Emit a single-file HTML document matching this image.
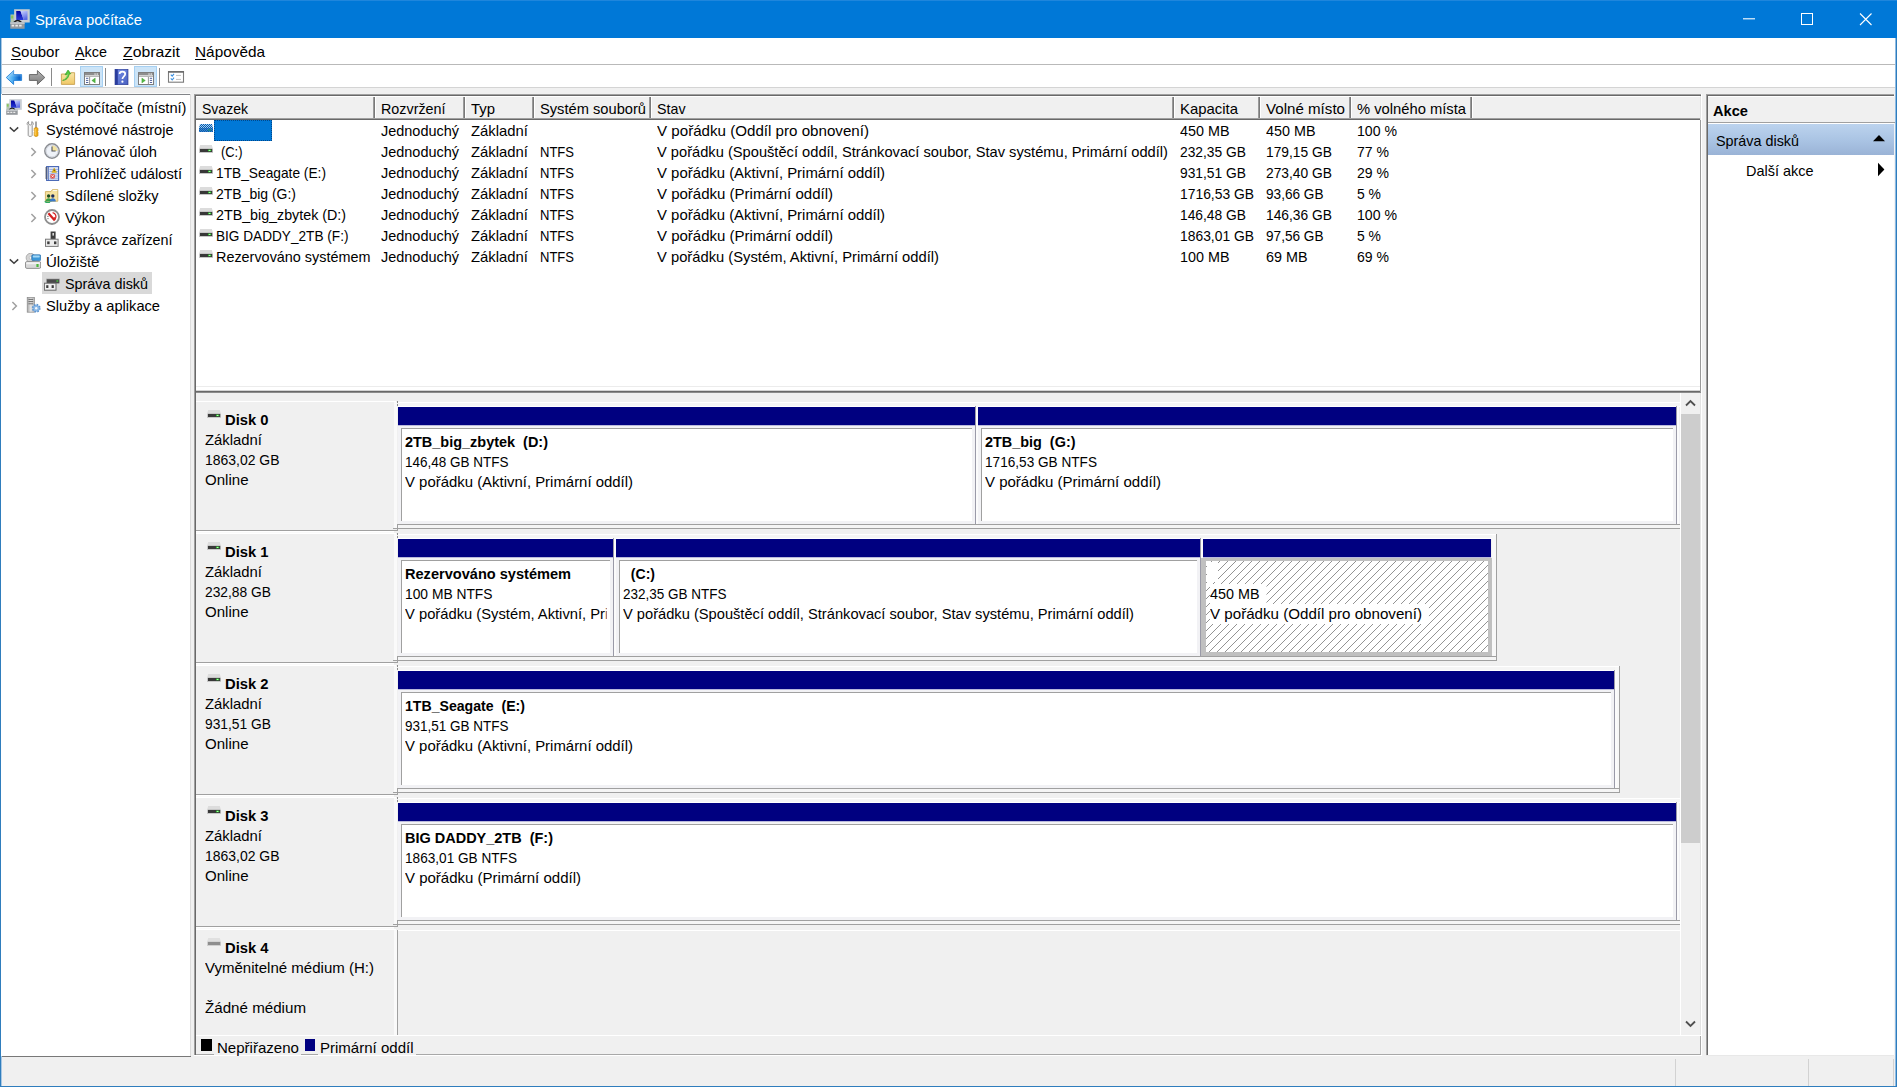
<!DOCTYPE html>
<html lang="cs"><head><meta charset="utf-8"><title>Správa počítače</title>
<style>
html,body{margin:0;padding:0;background:#f0f0f0;}
body{width:1897px;height:1087px;position:relative;overflow:hidden;font-family:"Liberation Sans",sans-serif;font-size:15px;color:#000;}
.r{position:absolute;}
.t{position:absolute;white-space:nowrap;line-height:20px;height:20px;transform-origin:0 0;}
.b{font-weight:bold;}
u{text-decoration:underline;text-underline-offset:2px;text-decoration-thickness:1px;}
</style></head>
<body>
<div class="r" style="left:0px;top:0px;width:1897px;height:1087px;background:#f0f0f0;"></div>
<div class="r" style="left:0px;top:0px;width:1897px;height:38px;background:#0078d7;"></div>
<div class="r" style="left:0px;top:0px;width:1897px;height:1px;background:#1f86dc;"></div>
<div class="r" style="left:1px;top:38px;width:1895px;height:26px;background:#ffffff;"></div>
<div class="r" style="left:1px;top:64px;width:1895px;height:1px;background:#b9b9b9;"></div>
<div class="r" style="left:1px;top:65px;width:1895px;height:22px;background:#ffffff;"></div>
<div class="r" style="left:1px;top:87px;width:1895px;height:1px;background:#d4d4d4;"></div>
<div class="r" style="left:0px;top:38px;width:1px;height:1049px;background:#2f7dbd;"></div>
<div class="r" style="left:1px;top:38px;width:1px;height:1048px;background:#a9c8e4;"></div>
<div class="r" style="left:1896px;top:38px;width:1px;height:1049px;background:#2f7dbd;"></div>
<div class="r" style="left:0px;top:1086px;width:1897px;height:1px;background:#2f7dbd;"></div>
<svg class="r" style="left:1730px;top:0px" width="167" height="38" viewBox="0 0 167 38"><path d="M13 18.8h12" stroke="#fff" stroke-width="1.1" fill="none"/><rect x="71.5" y="13.5" width="11" height="11" stroke="#fff" stroke-width="1" fill="none"/><path d="M130 13.5l11.5 11.5M141.5 13.5l-11.5 11.5" stroke="#fff" stroke-width="1.1" fill="none"/></svg>
<svg class="r" style="left:10px;top:9px" width="20" height="20" viewBox="0 0 16 16"><defs><linearGradient id="sa10" x1="0" y1="0" x2="0" y2="1"><stop offset="0" stop-color="#0000a0"/><stop offset="1" stop-color="#2a3cd8"/></linearGradient><linearGradient id="sb10" x1="0" y1="0" x2="0.4" y2="1"><stop offset="0" stop-color="#ccd4ff"/><stop offset="1" stop-color="#5a6ae6"/></linearGradient></defs><rect x="0.4" y="4.4" width="3.4" height="6.4" fill="#b4c4b0"/><rect x="0.9" y="5.2" width="1.7" height="2.4" fill="#86c85a"/><rect x="3.3" y="0.2" width="12.5" height="10.6" fill="#c8cdd3"/><path d="M5 1.6h3.4l2.6 7.2h-6z" fill="url(#sa10)"/><path d="M8.4 1.6h5.6v7.2h-3z" fill="url(#sb10)"/><path d="M3.2 10.6q2.9-3 5.8 0" stroke="#1a1a1a" stroke-width="1.2" fill="#e8e8e8"/><rect x="0.2" y="10.6" width="11.5" height="5.2" fill="#969a9e"/><rect x="0.2" y="10.6" width="11.5" height="1.3" fill="#c6cace"/><path d="M1.3 13.3h2M4.3 13.3h2M7.3 13.3h2" stroke="#ececec" stroke-width="1.3"/></svg>
<svg class="r" style="left:5px;top:69px" width="18" height="17" viewBox="0 0 18 17"><defs><linearGradient id="ba" x1="0" y1="0" x2="1" y2="0"><stop offset="0" stop-color="#a4e0ff"/><stop offset="0.45" stop-color="#46a8f0"/><stop offset="0.85" stop-color="#0a62c6"/><stop offset="1" stop-color="#2a86e0"/></linearGradient><linearGradient id="bb" x1="0" y1="0" x2="0" y2="1"><stop offset="0" stop-color="#fff" stop-opacity="0.45"/><stop offset="0.5" stop-color="#fff" stop-opacity="0"/></linearGradient></defs><path d="M1.3 8.5L8.6 1.6v4h8v5.8h-8v4z" fill="url(#ba)" stroke="#2a84d8" stroke-width="1" stroke-linejoin="round"/><path d="M1.3 8.5L8.6 1.6v4h8v5.8h-8v4z" fill="url(#bb)"/></svg>
<svg class="r" style="left:28px;top:69px" width="18" height="17" viewBox="0 0 18 17"><defs><linearGradient id="fa" x1="0" y1="0" x2="0" y2="1"><stop offset="0" stop-color="#b8b8b8"/><stop offset="0.5" stop-color="#989898"/><stop offset="1" stop-color="#7e7e7e"/></linearGradient></defs><path d="M16.8 8.5L9.4 1.6v4H1.4v5.8h8v4z" fill="url(#fa)" stroke="#686868" stroke-width="1" stroke-linejoin="round"/></svg>
<div class="r" style="left:51px;top:68px;width:1px;height:18px;background:#8a8a8a;"></div>
<div class="r" style="left:105px;top:68px;width:1px;height:18px;background:#8a8a8a;"></div>
<div class="r" style="left:159px;top:68px;width:1px;height:18px;background:#8a8a8a;"></div>
<svg class="r" style="left:60px;top:69px" width="17" height="17" viewBox="0 0 17 17"><defs><linearGradient id="fo" x1="0" y1="0" x2="0" y2="1"><stop offset="0" stop-color="#f8e6a8"/><stop offset="1" stop-color="#f0c866"/></linearGradient></defs><path d="M1.4 5h8.8l0.9-1.3h3.5v11.7h-13.2z" fill="url(#fo)" stroke="#c8a252" stroke-width="0.9"/><path d="M2.6 11.4c3-1.2 4.6-3.2 5-6.2l-2.6 0.6 3-4.8 2.8 3.6-1.6 0.3c-0.6 4-3 6.4-6.6 6.5z" fill="#52c83e" stroke="#2f9a22" stroke-width="0.6"/><path d="M4.2 10.2c2-1.2 3.4-3 3.8-5.6" stroke="#a8f090" stroke-width="0.7" fill="none"/></svg>
<div class="r" style="left:80px;top:66px;width:23px;height:21px;background:#cce4f7;border:1px solid #a6d0f2;box-sizing:border-box;"></div>
<div class="r" style="left:134px;top:66px;width:23px;height:21px;background:#cce4f7;border:1px solid #a6d0f2;box-sizing:border-box;"></div>
<svg class="r" style="left:84px;top:72px" width="16" height="13" viewBox="0 0 16 13"><rect x="0.5" y="0.5" width="15" height="12" fill="#fff" stroke="#7e7e7e"/><rect x="1" y="1" width="14" height="2.4" fill="#8e8e8e"/><rect x="10.4" y="1.5" width="1.3" height="1.1" fill="#fff"/><rect x="12.6" y="1.5" width="1.3" height="1.1" fill="#fff"/><rect x="1" y="4.1" width="14" height="0.8" fill="#a8a8a8"/><rect x="5.2" y="4.9" width="0.9" height="7.6" fill="#8a8a8a"/><rect x="2" y="5.8" width="2.3" height="1" fill="#52629c"/><rect x="2" y="7.9" width="2.3" height="1" fill="#52629c"/><rect x="2" y="10" width="2.3" height="1" fill="#52629c"/><path d="M11.2 6.1v4.8l-3.4-2.4z" fill="#52b844" stroke="#3a9a2e" stroke-width="0.4"/></svg>
<svg class="r" style="left:138px;top:72px" width="16" height="13" viewBox="0 0 16 13"><rect x="0.5" y="0.5" width="15" height="12" fill="#fff" stroke="#7e7e7e"/><rect x="1" y="1" width="14" height="2.4" fill="#8e8e8e"/><rect x="10.4" y="1.5" width="1.3" height="1.1" fill="#fff"/><rect x="12.6" y="1.5" width="1.3" height="1.1" fill="#fff"/><rect x="1" y="4.1" width="14" height="0.8" fill="#a8a8a8"/><rect x="9.9" y="4.9" width="0.9" height="7.6" fill="#8a8a8a"/><rect x="11.8" y="5.8" width="2.3" height="1" fill="#52629c"/><rect x="11.8" y="7.9" width="2.3" height="1" fill="#52629c"/><rect x="11.8" y="10" width="2.3" height="1" fill="#52629c"/><path d="M3.9 6.1v4.8l3.4-2.4z" fill="#52b844" stroke="#3a9a2e" stroke-width="0.4"/></svg>
<svg class="r" style="left:114px;top:69px" width="15" height="16" viewBox="0 0 15 16"><defs><linearGradient id="hg" x1="0" y1="0" x2="1" y2="1"><stop offset="0" stop-color="#7890ea"/><stop offset="1" stop-color="#4860c0"/></linearGradient></defs><rect x="1" y="0.2" width="13" height="15.6" fill="url(#hg)" stroke="#1e2e86" stroke-width="0.6"/><rect x="1" y="0.2" width="2.8" height="15.6" fill="#2a3c9c"/><path d="M5.6 5c0-3.2 5.6-3.2 5.6 0 0 2.2-2.8 2.4-2.8 5" stroke="#fff" stroke-width="1.7" fill="none"/><circle cx="8.4" cy="12.7" r="1.1" fill="#fff"/></svg>
<svg class="r" style="left:167px;top:70px" width="18" height="14" viewBox="0 0 18 14"><rect x="1.5" y="1.6" width="15" height="10.6" fill="#fff" stroke="#7c7c7c" stroke-width="1.1"/><rect x="1" y="1" width="16" height="1.7" fill="#6c6c6c"/><path d="M3.8 4.6l1.4 1.6 1.8-2.4M3.8 8.4l1.4 1.6 1.8-2.4" stroke="#3c90e0" stroke-width="1.1" fill="none"/><path d="M9 5.4h5M9 9.4h5" stroke="#c0c0c0" stroke-width="1"/></svg>
<div class="r" style="left:1px;top:94px;width:190px;height:962px;background:#ffffff;"></div>
<div class="r" style="left:2px;top:93px;width:189px;height:1px;background:#fafafa;"></div>
<div class="r" style="left:2px;top:94px;width:189px;height:1px;background:#828488;"></div>
<div class="r" style="left:190px;top:94px;width:1px;height:962px;background:#dcdcdc;"></div>
<div class="r" style="left:2px;top:1056px;width:189px;height:1px;background:#787878;"></div>
<div class="r" style="left:42px;top:272px;width:110px;height:22px;background:#d9d9d9;"></div>
<svg class="r" style="left:6px;top:99px" width="16" height="16" viewBox="0 0 16 16"><defs><linearGradient id="sa6" x1="0" y1="0" x2="0" y2="1"><stop offset="0" stop-color="#0000a0"/><stop offset="1" stop-color="#2a3cd8"/></linearGradient><linearGradient id="sb6" x1="0" y1="0" x2="0.4" y2="1"><stop offset="0" stop-color="#ccd4ff"/><stop offset="1" stop-color="#5a6ae6"/></linearGradient></defs><rect x="0.4" y="4.4" width="3.4" height="6.4" fill="#b4c4b0"/><rect x="0.9" y="5.2" width="1.7" height="2.4" fill="#86c85a"/><rect x="3.3" y="0.2" width="12.5" height="10.6" fill="#c8cdd3"/><path d="M5 1.6h3.4l2.6 7.2h-6z" fill="url(#sa6)"/><path d="M8.4 1.6h5.6v7.2h-3z" fill="url(#sb6)"/><path d="M3.2 10.6q2.9-3 5.8 0" stroke="#1a1a1a" stroke-width="1.2" fill="#e8e8e8"/><rect x="0.2" y="10.6" width="11.5" height="5.2" fill="#969a9e"/><rect x="0.2" y="10.6" width="11.5" height="1.3" fill="#c6cace"/><path d="M1.3 13.3h2M4.3 13.3h2M7.3 13.3h2" stroke="#ececec" stroke-width="1.3"/></svg>
<svg class="r" style="left:25px;top:121px" width="16" height="16" viewBox="0 0 16 16"><path d="M3.6 0.6c-1.8 0.7-2 2.9-0.4 4v9.8c0 1.4 4 1.4 4 0v-9.8c1.6-1.1 1.4-3.3-0.4-4v2.6l-1.6 0.9-1.6-0.9z" fill="#f4f4f4" stroke="#8a8a8a" stroke-width="0.9"/><path d="M11 0.4v7" stroke="#5a5a5a" stroke-width="1.1"/><path d="M9.2 7.6c0-1.4 3.8-1.4 3.8 0v2.2c-0.5 0.5-0.5 0.9 0 1.4v3.2c0 1.4-3.8 1.4-3.8 0v-3.2c0.5-0.5 0.5-0.9 0-1.4z" fill="#f2b01e" stroke="#c08208" stroke-width="0.6"/><path d="M10.2 8v6.2" stroke="#ffd978" stroke-width="0.8"/></svg>
<svg class="r" style="left:9px;top:126.4px" width="10" height="8" viewBox="0 0 10 8"><path d="M0.8 1.4l4.2 3.9 4.2-3.9" stroke="#404040" stroke-width="1.5" fill="none"/></svg>
<svg class="r" style="left:44px;top:143px" width="16" height="16" viewBox="0 0 16 16"><circle cx="8" cy="8" r="7.2" fill="#eef2f8" stroke="#8a8d92" stroke-width="1.5"/><path d="M8 8V2.2A5.8 5.8 0 0 1 13.8 8z" fill="#f3e3a0"/><circle cx="8" cy="8" r="5.9" fill="none" stroke="#c8ccd4" stroke-width="0.7"/><path d="M8 3.4v4.6h3.6" stroke="#50545c" stroke-width="1.1" fill="none"/></svg>
<svg class="r" style="left:30px;top:147.4px" width="7" height="10" viewBox="0 0 7 10"><path d="M1.4 0.9l4 4.1-4 4.1" stroke="#a0a0a0" stroke-width="1.5" fill="none"/></svg>
<svg class="r" style="left:44px;top:165px" width="16" height="16" viewBox="0 0 16 16"><rect x="2.6" y="1.6" width="12" height="13.8" fill="#e4eaf8" stroke="#4464b4" stroke-width="1.1"/><path d="M4.4 1.6v13.8" stroke="#4464b4" stroke-width="0.8"/><path d="M1.2 3h2.4M1.2 5h2.4M1.2 7h2.4M1.2 9h2.4M1.2 11h2.4M1.2 13h2.4" stroke="#4a4a4a" stroke-width="0.9"/><path d="M5.4 4.4h8.6M5.4 6.6h8.6M5.4 8.8h8.6M5.4 11h8.6M5.4 13.2h8.6" stroke="#86a0dc" stroke-width="0.8"/><path d="M10.2 3l2.4 4.4h-4.8z" fill="#f2c41c" stroke="#b48a00" stroke-width="0.4"/><path d="M10.2 4.6v1.6" stroke="#3a2a00" stroke-width="0.9"/><rect x="6.4" y="9.2" width="4.4" height="4.2" rx="0.8" fill="#e0463c"/><path d="M7.5 10.2l2.2 2.2M9.7 10.2l-2.2 2.2" stroke="#fff" stroke-width="0.9"/></svg>
<svg class="r" style="left:30px;top:169.4px" width="7" height="10" viewBox="0 0 7 10"><path d="M1.4 0.9l4 4.1-4 4.1" stroke="#a0a0a0" stroke-width="1.5" fill="none"/></svg>
<svg class="r" style="left:44px;top:187px" width="16" height="16" viewBox="0 0 16 16"><path d="M1.4 4.6h5.6l1.4-2h5.4v11.6h-12.4z" fill="#f6e2a0" stroke="#d0b060" stroke-width="0.9"/><path d="M8.8 3.4h4.4" stroke="#fff" stroke-width="0.9"/><circle cx="4.6" cy="9" r="1.7" fill="#1e4e1e"/><path d="M1.6 14.6c0-4.4 6-4.4 6 0z" fill="#3aa048"/><circle cx="8.8" cy="9" r="1.7" fill="#1c2c5c"/><path d="M5.8 14.6c0-4.4 6-4.4 6 0z" fill="#3a78c8"/><path d="M0.8 14.2c1.4 1.6 3.6 1.8 5.2 0.8" stroke="#30a860" stroke-width="1.3" fill="none"/></svg>
<svg class="r" style="left:30px;top:191.4px" width="7" height="10" viewBox="0 0 7 10"><path d="M1.4 0.9l4 4.1-4 4.1" stroke="#a0a0a0" stroke-width="1.5" fill="none"/></svg>
<svg class="r" style="left:44px;top:209px" width="16" height="16" viewBox="0 0 16 16"><circle cx="8" cy="8" r="7" fill="#fff" stroke="#8e8e8e" stroke-width="1.8"/><path d="M4.4 4.2l6.4 7.2" stroke="#d42020" stroke-width="2.2"/><path d="M8.6 3.6c3.2 0.6 4.2 4 2.6 6.4l-1.2-1.6" stroke="#d42020" stroke-width="1.3" fill="none"/><path d="M3.2 7.4h1.4M3.4 9.6h1.2" stroke="#555" stroke-width="0.8"/></svg>
<svg class="r" style="left:30px;top:213.4px" width="7" height="10" viewBox="0 0 7 10"><path d="M1.4 0.9l4 4.1-4 4.1" stroke="#a0a0a0" stroke-width="1.5" fill="none"/></svg>
<svg class="r" style="left:44px;top:231px" width="16" height="16" viewBox="0 0 16 16"><rect x="6.6" y="0.5" width="5" height="7.6" fill="#3e3e3e"/><rect x="8.4" y="2" width="1.6" height="2.6" fill="#d8d8d8"/><rect x="1.5" y="8.2" width="12.6" height="7.2" fill="#ececec" stroke="#7a7a7a" stroke-width="1"/><rect x="3.2" y="10.4" width="2.4" height="2.8" fill="#3e3e3e"/><rect x="10" y="10.4" width="2.4" height="2.8" fill="#3e3e3e"/></svg>
<svg class="r" style="left:25px;top:253px" width="16" height="16" viewBox="0 0 16 16"><circle cx="5.6" cy="4.8" r="4.5" fill="#d4d4d4" stroke="#9a9a9a" stroke-width="0.7"/><circle cx="5.6" cy="4.8" r="1.4" fill="#f6f6f6" stroke="#aaa" stroke-width="0.5"/><rect x="6.8" y="1.8" width="8.9" height="5.8" rx="1" fill="#3c98d8" stroke="#2a6ca8" stroke-width="0.7"/><rect x="7.8" y="2.6" width="6.9" height="1.8" rx="0.6" fill="#a4d8f6"/><rect x="0.5" y="8.6" width="15.2" height="6.8" rx="1.4" fill="#d8d8d8" stroke="#8a8a8a" stroke-width="0.9"/><rect x="1.2" y="9.2" width="13.8" height="2" rx="0.8" fill="#f2f2f2"/><rect x="11.4" y="11" width="2.2" height="3" fill="#4ab83a"/></svg>
<svg class="r" style="left:9px;top:258.4px" width="10" height="8" viewBox="0 0 10 8"><path d="M0.8 1.4l4.2 3.9 4.2-3.9" stroke="#404040" stroke-width="1.5" fill="none"/></svg>
<svg class="r" style="left:44px;top:275px" width="16" height="16" viewBox="0 0 16 16"><rect x="2.6" y="3.8" width="12.8" height="4.6" fill="#4a4a4a"/><rect x="2.6" y="3" width="12.8" height="1.2" fill="#c4c4c4"/><rect x="12.4" y="5.4" width="1.8" height="1.2" fill="#48dc3c"/><rect x="0.4" y="8.2" width="11.6" height="7" fill="#f0f0f0" stroke="#6a6a6a" stroke-width="1"/><rect x="2.2" y="10.2" width="2.2" height="2.8" fill="#3e3e3e"/><rect x="7.6" y="10.2" width="2.2" height="2.8" fill="#3e3e3e"/></svg>
<svg class="r" style="left:25px;top:297px" width="16" height="16" viewBox="0 0 16 16"><defs><linearGradient id="twr" x1="0" y1="0" x2="1" y2="0"><stop offset="0" stop-color="#a8a8a8"/><stop offset="0.5" stop-color="#e6e6e6"/><stop offset="1" stop-color="#b4b4b4"/></linearGradient></defs><rect x="2.2" y="0.4" width="7.2" height="14.8" fill="url(#twr)" stroke="#8a8a8a" stroke-width="0.7"/><path d="M3.4 2.4h4.8M3.4 4.6h4.8M3.4 6.8h4.8" stroke="#6e6e6e" stroke-width="1"/><circle cx="11.2" cy="11.2" r="3.5" fill="#8ab8e6" stroke="#5c94d0" stroke-width="1.8" stroke-dasharray="1.5 1.25"/><circle cx="11.2" cy="11.2" r="2.6" fill="#8ab8e6"/><circle cx="11.2" cy="11.2" r="1.2" fill="#f4f8fc"/></svg>
<svg class="r" style="left:11px;top:301.4px" width="7" height="10" viewBox="0 0 7 10"><path d="M1.4 0.9l4 4.1-4 4.1" stroke="#a0a0a0" stroke-width="1.5" fill="none"/></svg>
<div class="r" style="left:194px;top:94px;width:1508px;height:1px;background:#a0a0a0;"></div>
<div class="r" style="left:195px;top:95px;width:1506px;height:1px;background:#696969;"></div>
<div class="r" style="left:194px;top:94px;width:1px;height:962px;background:#a0a0a0;"></div>
<div class="r" style="left:195px;top:95px;width:1px;height:960px;background:#696969;"></div>
<div class="r" style="left:1701px;top:94px;width:1px;height:962px;background:#ffffff;"></div>
<div class="r" style="left:194px;top:1055px;width:1508px;height:1px;background:#ffffff;"></div>
<div class="r" style="left:1700px;top:96px;width:1px;height:959px;background:#e3e3e3;"></div>
<div class="r" style="left:196px;top:1054px;width:1505px;height:1px;background:#e3e3e3;"></div>
<div class="r" style="left:196px;top:120px;width:1504px;height:267px;background:#ffffff;"></div>
<div class="r" style="left:196px;top:96px;width:1504px;height:1px;background:#ffffff;"></div>
<div class="r" style="left:196px;top:97px;width:1504px;height:21px;background:#f0f0f0;"></div>
<div class="r" style="left:196px;top:118px;width:1504px;height:1px;background:#a0a0a0;"></div>
<div class="r" style="left:196px;top:119px;width:1504px;height:1px;background:#696969;"></div>
<div class="r" style="left:373px;top:97px;width:1px;height:21px;background:#9a9a9a;"></div>
<div class="r" style="left:374px;top:97px;width:1px;height:21px;background:#7a7a7a;"></div>
<div class="r" style="left:375px;top:97px;width:1px;height:21px;background:#ffffff;"></div>
<div class="r" style="left:463px;top:97px;width:1px;height:21px;background:#9a9a9a;"></div>
<div class="r" style="left:464px;top:97px;width:1px;height:21px;background:#7a7a7a;"></div>
<div class="r" style="left:465px;top:97px;width:1px;height:21px;background:#ffffff;"></div>
<div class="r" style="left:532px;top:97px;width:1px;height:21px;background:#9a9a9a;"></div>
<div class="r" style="left:533px;top:97px;width:1px;height:21px;background:#7a7a7a;"></div>
<div class="r" style="left:534px;top:97px;width:1px;height:21px;background:#ffffff;"></div>
<div class="r" style="left:649px;top:97px;width:1px;height:21px;background:#9a9a9a;"></div>
<div class="r" style="left:650px;top:97px;width:1px;height:21px;background:#7a7a7a;"></div>
<div class="r" style="left:651px;top:97px;width:1px;height:21px;background:#ffffff;"></div>
<div class="r" style="left:1172px;top:97px;width:1px;height:21px;background:#9a9a9a;"></div>
<div class="r" style="left:1173px;top:97px;width:1px;height:21px;background:#7a7a7a;"></div>
<div class="r" style="left:1174px;top:97px;width:1px;height:21px;background:#ffffff;"></div>
<div class="r" style="left:1258px;top:97px;width:1px;height:21px;background:#9a9a9a;"></div>
<div class="r" style="left:1259px;top:97px;width:1px;height:21px;background:#7a7a7a;"></div>
<div class="r" style="left:1260px;top:97px;width:1px;height:21px;background:#ffffff;"></div>
<div class="r" style="left:1349px;top:97px;width:1px;height:21px;background:#9a9a9a;"></div>
<div class="r" style="left:1350px;top:97px;width:1px;height:21px;background:#7a7a7a;"></div>
<div class="r" style="left:1351px;top:97px;width:1px;height:21px;background:#ffffff;"></div>
<div class="r" style="left:1470px;top:97px;width:1px;height:21px;background:#9a9a9a;"></div>
<div class="r" style="left:1471px;top:97px;width:1px;height:21px;background:#7a7a7a;"></div>
<div class="r" style="left:1472px;top:97px;width:1px;height:21px;background:#ffffff;"></div>
<svg class="r" style="left:199px;top:124px" width="14" height="9" viewBox="0 0 14 9"><defs><pattern id="dth" width="2" height="2" patternUnits="userSpaceOnUse"><rect width="1" height="1" fill="#0a58a8"/><rect x="1" y="1" width="1" height="1" fill="#0a58a8"/><rect x="1" width="1" height="1" fill="#9cd0f8"/><rect y="1" width="1" height="1" fill="#9cd0f8"/></pattern><pattern id="dtk" width="2" height="2" patternUnits="userSpaceOnUse"><rect width="2" height="2" fill="#0c5cae"/><rect x="1" width="1" height="1" fill="#3c84cc"/><rect y="1" width="1" height="1" fill="#3c84cc"/></pattern></defs><path d="M1 0h12l1 4h-14z" fill="url(#dth)"/><rect x="0" y="4" width="14" height="4" fill="url(#dtk)"/><rect x="9" y="5" width="3" height="2" fill="#1a8a8a"/></svg>
<svg class="r" style="left:199px;top:145px" width="14" height="9" viewBox="0 0 14 9"><path d="M1.2 0h11.6l1.2 3.9h-14z" fill="#dcdcdc"/><rect x="0" y="3.8" width="14" height="4.2" fill="#c8c8c8"/><rect x="1" y="3.9" width="12.2" height="3.1" fill="#383838"/><rect x="9" y="4.7" width="3.2" height="1.5" fill="#38d838"/><rect x="10" y="4.9" width="1.2" height="1" fill="#b8ffb8"/></svg>
<svg class="r" style="left:199px;top:166px" width="14" height="9" viewBox="0 0 14 9"><path d="M1.2 0h11.6l1.2 3.9h-14z" fill="#dcdcdc"/><rect x="0" y="3.8" width="14" height="4.2" fill="#c8c8c8"/><rect x="1" y="3.9" width="12.2" height="3.1" fill="#383838"/><rect x="9" y="4.7" width="3.2" height="1.5" fill="#38d838"/><rect x="10" y="4.9" width="1.2" height="1" fill="#b8ffb8"/></svg>
<svg class="r" style="left:199px;top:187px" width="14" height="9" viewBox="0 0 14 9"><path d="M1.2 0h11.6l1.2 3.9h-14z" fill="#dcdcdc"/><rect x="0" y="3.8" width="14" height="4.2" fill="#c8c8c8"/><rect x="1" y="3.9" width="12.2" height="3.1" fill="#383838"/><rect x="9" y="4.7" width="3.2" height="1.5" fill="#38d838"/><rect x="10" y="4.9" width="1.2" height="1" fill="#b8ffb8"/></svg>
<svg class="r" style="left:199px;top:208px" width="14" height="9" viewBox="0 0 14 9"><path d="M1.2 0h11.6l1.2 3.9h-14z" fill="#dcdcdc"/><rect x="0" y="3.8" width="14" height="4.2" fill="#c8c8c8"/><rect x="1" y="3.9" width="12.2" height="3.1" fill="#383838"/><rect x="9" y="4.7" width="3.2" height="1.5" fill="#38d838"/><rect x="10" y="4.9" width="1.2" height="1" fill="#b8ffb8"/></svg>
<svg class="r" style="left:199px;top:229px" width="14" height="9" viewBox="0 0 14 9"><path d="M1.2 0h11.6l1.2 3.9h-14z" fill="#dcdcdc"/><rect x="0" y="3.8" width="14" height="4.2" fill="#c8c8c8"/><rect x="1" y="3.9" width="12.2" height="3.1" fill="#383838"/><rect x="9" y="4.7" width="3.2" height="1.5" fill="#38d838"/><rect x="10" y="4.9" width="1.2" height="1" fill="#b8ffb8"/></svg>
<svg class="r" style="left:199px;top:250px" width="14" height="9" viewBox="0 0 14 9"><path d="M1.2 0h11.6l1.2 3.9h-14z" fill="#dcdcdc"/><rect x="0" y="3.8" width="14" height="4.2" fill="#c8c8c8"/><rect x="1" y="3.9" width="12.2" height="3.1" fill="#383838"/><rect x="9" y="4.7" width="3.2" height="1.5" fill="#38d838"/><rect x="10" y="4.9" width="1.2" height="1" fill="#b8ffb8"/></svg>
<div class="r" style="left:214px;top:120px;width:58px;height:21px;background:#0078d7;outline:1px dotted rgba(0,40,90,0.6);outline-offset:-1px;"></div>
<div class="r" style="left:196px;top:387px;width:1504px;height:1px;background:#ffffff;"></div>
<div class="r" style="left:196px;top:388px;width:1504px;height:2px;background:#ffffff;"></div>
<div class="r" style="left:196px;top:386px;width:1504px;height:1px;background:#ececec;"></div>
<div class="r" style="left:196px;top:390px;width:1505px;height:1px;background:#d4d4d4;"></div>
<div class="r" style="left:196px;top:391px;width:1505px;height:1px;background:#696969;"></div>
<div class="r" style="left:196px;top:392px;width:1505px;height:1px;background:#8c8c8c;"></div>
<div class="r" style="left:1700px;top:120px;width:1px;height:272px;background:#9a9a9a;"></div>
<div class="r" style="left:196px;top:401px;width:200px;height:1px;background:#ffffff;"></div>
<div class="r" style="left:196px;top:530px;width:202px;height:1px;background:#a0a0a0;"></div>
<div class="r" style="left:196px;top:531px;width:198px;height:1px;background:#ffffff;"></div>
<div class="r" style="left:196px;top:532px;width:198px;height:1px;background:#fafafa;"></div>
<div class="r" style="left:394px;top:402px;width:3px;height:127px;background:#fafafa;"></div>
<svg class="r" style="left:207px;top:410px" width="14" height="9" viewBox="0 0 14 9"><path d="M1.2 0h11.6l1.2 3.9h-14z" fill="#dcdcdc"/><rect x="0" y="3.8" width="14" height="4.2" fill="#c8c8c8"/><rect x="1" y="3.9" width="12.2" height="3.1" fill="#383838"/><rect x="9" y="4.7" width="3.2" height="1.5" fill="#38d838"/><rect x="10" y="4.9" width="1.2" height="1" fill="#b8ffb8"/></svg>
<div class="r" style="left:397px;top:401px;width:1px;height:6px;background:repeating-linear-gradient(#8c8c8c 0,#8c8c8c 2px,transparent 2px,transparent 3px)"></div>
<div class="r" style="left:398px;top:402px;width:1282px;height:1px;background:#ffffff;"></div>
<div class="r" style="left:398px;top:403px;width:1282px;height:3px;background:#f5f5f5;"></div>
<div class="r" style="left:398px;top:406px;width:1282px;height:1px;background:#ffffff;"></div>
<div class="r" style="left:398px;top:425px;width:1282px;height:99px;background:#f2f2f5;"></div>
<div class="r" style="left:397px;top:524px;width:1284px;height:1px;background:#a0a0a0;"></div>
<div class="r" style="left:398px;top:525px;width:1282px;height:3px;background:#f5f5f5;"></div>
<div class="r" style="left:393px;top:528px;width:1288px;height:1px;background:#a0a0a0;"></div>
<div class="r" style="left:397px;top:524px;width:1px;height:7px;background:#a0a0a0;"></div>
<div class="r" style="left:398px;top:407px;width:577px;height:18px;background:#000080;"></div>
<div class="r" style="left:398px;top:425px;width:577px;height:1px;background:#b9b9dc;"></div>
<div class="r" style="left:975px;top:406px;width:1px;height:118px;background:#9a9aa8;"></div>
<div class="r" style="left:976px;top:406px;width:2px;height:118px;background:#fbfbfb;"></div>
<div class="r" style="left:401px;top:428px;width:571px;height:93px;background:#ffffff;border-top:1px solid #a0a0a0;border-left:1px solid #a0a0a0;box-sizing:border-box;"></div>
<div class="r" style="left:978px;top:407px;width:698px;height:18px;background:#000080;"></div>
<div class="r" style="left:978px;top:425px;width:698px;height:1px;background:#b9b9dc;"></div>
<div class="r" style="left:1676px;top:406px;width:1px;height:118px;background:#9a9aa8;"></div>
<div class="r" style="left:1677px;top:406px;width:2px;height:118px;background:#fbfbfb;"></div>
<div class="r" style="left:981px;top:428px;width:692px;height:93px;background:#ffffff;border-top:1px solid #a0a0a0;border-left:1px solid #a0a0a0;box-sizing:border-box;"></div>
<div class="r" style="left:196px;top:533px;width:200px;height:1px;background:#ffffff;"></div>
<div class="r" style="left:196px;top:662px;width:202px;height:1px;background:#a0a0a0;"></div>
<div class="r" style="left:196px;top:663px;width:198px;height:1px;background:#ffffff;"></div>
<div class="r" style="left:196px;top:664px;width:198px;height:1px;background:#fafafa;"></div>
<div class="r" style="left:394px;top:534px;width:3px;height:127px;background:#fafafa;"></div>
<svg class="r" style="left:207px;top:542px" width="14" height="9" viewBox="0 0 14 9"><path d="M1.2 0h11.6l1.2 3.9h-14z" fill="#dcdcdc"/><rect x="0" y="3.8" width="14" height="4.2" fill="#c8c8c8"/><rect x="1" y="3.9" width="12.2" height="3.1" fill="#383838"/><rect x="9" y="4.7" width="3.2" height="1.5" fill="#38d838"/><rect x="10" y="4.9" width="1.2" height="1" fill="#b8ffb8"/></svg>
<div class="r" style="left:397px;top:533px;width:1px;height:6px;background:repeating-linear-gradient(#8c8c8c 0,#8c8c8c 2px,transparent 2px,transparent 3px)"></div>
<div class="r" style="left:398px;top:534px;width:1098px;height:1px;background:#ffffff;"></div>
<div class="r" style="left:398px;top:535px;width:1098px;height:3px;background:#f5f5f5;"></div>
<div class="r" style="left:398px;top:538px;width:1098px;height:1px;background:#ffffff;"></div>
<div class="r" style="left:398px;top:557px;width:1098px;height:99px;background:#f2f2f5;"></div>
<div class="r" style="left:397px;top:656px;width:1100px;height:1px;background:#a0a0a0;"></div>
<div class="r" style="left:398px;top:657px;width:1098px;height:3px;background:#f5f5f5;"></div>
<div class="r" style="left:393px;top:660px;width:1104px;height:1px;background:#a0a0a0;"></div>
<div class="r" style="left:397px;top:656px;width:1px;height:7px;background:#a0a0a0;"></div>
<div class="r" style="left:1496px;top:534px;width:1px;height:127px;background:#a0a0a0;"></div>
<div class="r" style="left:1492px;top:535px;width:4px;height:121px;background:#f8f8f8;"></div>
<div class="r" style="left:398px;top:539px;width:215px;height:18px;background:#000080;"></div>
<div class="r" style="left:398px;top:557px;width:215px;height:1px;background:#b9b9dc;"></div>
<div class="r" style="left:613px;top:538px;width:1px;height:118px;background:#9a9aa8;"></div>
<div class="r" style="left:614px;top:538px;width:2px;height:118px;background:#fbfbfb;"></div>
<div class="r" style="left:401px;top:560px;width:209px;height:93px;background:#ffffff;border-top:1px solid #a0a0a0;border-left:1px solid #a0a0a0;box-sizing:border-box;"></div>
<div class="r" style="left:616px;top:539px;width:584px;height:18px;background:#000080;"></div>
<div class="r" style="left:616px;top:557px;width:584px;height:1px;background:#b9b9dc;"></div>
<div class="r" style="left:1200px;top:538px;width:1px;height:118px;background:#9a9aa8;"></div>
<div class="r" style="left:1201px;top:538px;width:2px;height:118px;background:#fbfbfb;"></div>
<div class="r" style="left:619px;top:560px;width:578px;height:93px;background:#ffffff;border-top:1px solid #a0a0a0;border-left:1px solid #a0a0a0;box-sizing:border-box;"></div>
<div class="r" style="left:1203px;top:539px;width:288px;height:18px;background:#000080;"></div>
<div class="r" style="left:1203px;top:557px;width:288px;height:1px;background:#b9b9dc;"></div>
<div class="r" style="left:1201px;top:558px;width:291px;height:98px;background:#c0c0c0;"></div>
<svg class="r" style="left:1206px;top:561px" width="282" height="91" viewBox="0 0 282 91"><defs><pattern id="hatch" x="6" y="0" width="8" height="8" patternUnits="userSpaceOnUse"><rect width="8" height="8" fill="#fff"/><path d="M-1 9L9 -1M-1 1L1 -1M7 9L9 7" stroke="#808080" stroke-width="0.85"/></pattern></defs><rect width="282" height="91" fill="url(#hatch)"/></svg>
<div class="r" style="left:1207px;top:562px;width:11px;height:20px;background:#ffffff;"></div>
<div class="r" style="left:196px;top:665px;width:200px;height:1px;background:#ffffff;"></div>
<div class="r" style="left:196px;top:794px;width:202px;height:1px;background:#a0a0a0;"></div>
<div class="r" style="left:196px;top:795px;width:198px;height:1px;background:#ffffff;"></div>
<div class="r" style="left:196px;top:796px;width:198px;height:1px;background:#fafafa;"></div>
<div class="r" style="left:394px;top:666px;width:3px;height:127px;background:#fafafa;"></div>
<svg class="r" style="left:207px;top:674px" width="14" height="9" viewBox="0 0 14 9"><path d="M1.2 0h11.6l1.2 3.9h-14z" fill="#dcdcdc"/><rect x="0" y="3.8" width="14" height="4.2" fill="#c8c8c8"/><rect x="1" y="3.9" width="12.2" height="3.1" fill="#383838"/><rect x="9" y="4.7" width="3.2" height="1.5" fill="#38d838"/><rect x="10" y="4.9" width="1.2" height="1" fill="#b8ffb8"/></svg>
<div class="r" style="left:397px;top:665px;width:1px;height:6px;background:repeating-linear-gradient(#8c8c8c 0,#8c8c8c 2px,transparent 2px,transparent 3px)"></div>
<div class="r" style="left:398px;top:666px;width:1221px;height:1px;background:#ffffff;"></div>
<div class="r" style="left:398px;top:667px;width:1221px;height:3px;background:#f5f5f5;"></div>
<div class="r" style="left:398px;top:670px;width:1221px;height:1px;background:#ffffff;"></div>
<div class="r" style="left:398px;top:689px;width:1221px;height:99px;background:#f2f2f5;"></div>
<div class="r" style="left:397px;top:788px;width:1223px;height:1px;background:#a0a0a0;"></div>
<div class="r" style="left:398px;top:789px;width:1221px;height:3px;background:#f5f5f5;"></div>
<div class="r" style="left:393px;top:792px;width:1227px;height:1px;background:#a0a0a0;"></div>
<div class="r" style="left:397px;top:788px;width:1px;height:7px;background:#a0a0a0;"></div>
<div class="r" style="left:1619px;top:666px;width:1px;height:127px;background:#a0a0a0;"></div>
<div class="r" style="left:1615px;top:667px;width:4px;height:121px;background:#f8f8f8;"></div>
<div class="r" style="left:398px;top:671px;width:1216px;height:18px;background:#000080;"></div>
<div class="r" style="left:398px;top:689px;width:1216px;height:1px;background:#b9b9dc;"></div>
<div class="r" style="left:1614px;top:670px;width:1px;height:118px;background:#9a9aa8;"></div>
<div class="r" style="left:1615px;top:670px;width:2px;height:118px;background:#fbfbfb;"></div>
<div class="r" style="left:401px;top:692px;width:1210px;height:93px;background:#ffffff;border-top:1px solid #a0a0a0;border-left:1px solid #a0a0a0;box-sizing:border-box;"></div>
<div class="r" style="left:196px;top:797px;width:200px;height:1px;background:#ffffff;"></div>
<div class="r" style="left:196px;top:926px;width:202px;height:1px;background:#a0a0a0;"></div>
<div class="r" style="left:196px;top:927px;width:198px;height:1px;background:#ffffff;"></div>
<div class="r" style="left:196px;top:928px;width:198px;height:1px;background:#fafafa;"></div>
<div class="r" style="left:394px;top:798px;width:3px;height:127px;background:#fafafa;"></div>
<svg class="r" style="left:207px;top:806px" width="14" height="9" viewBox="0 0 14 9"><path d="M1.2 0h11.6l1.2 3.9h-14z" fill="#dcdcdc"/><rect x="0" y="3.8" width="14" height="4.2" fill="#c8c8c8"/><rect x="1" y="3.9" width="12.2" height="3.1" fill="#383838"/><rect x="9" y="4.7" width="3.2" height="1.5" fill="#38d838"/><rect x="10" y="4.9" width="1.2" height="1" fill="#b8ffb8"/></svg>
<div class="r" style="left:397px;top:797px;width:1px;height:6px;background:repeating-linear-gradient(#8c8c8c 0,#8c8c8c 2px,transparent 2px,transparent 3px)"></div>
<div class="r" style="left:398px;top:798px;width:1282px;height:1px;background:#ffffff;"></div>
<div class="r" style="left:398px;top:799px;width:1282px;height:3px;background:#f5f5f5;"></div>
<div class="r" style="left:398px;top:802px;width:1282px;height:1px;background:#ffffff;"></div>
<div class="r" style="left:398px;top:821px;width:1282px;height:99px;background:#f2f2f5;"></div>
<div class="r" style="left:397px;top:920px;width:1284px;height:1px;background:#a0a0a0;"></div>
<div class="r" style="left:398px;top:921px;width:1282px;height:3px;background:#f5f5f5;"></div>
<div class="r" style="left:393px;top:924px;width:1288px;height:1px;background:#a0a0a0;"></div>
<div class="r" style="left:397px;top:920px;width:1px;height:7px;background:#a0a0a0;"></div>
<div class="r" style="left:398px;top:803px;width:1278px;height:18px;background:#000080;"></div>
<div class="r" style="left:398px;top:821px;width:1278px;height:1px;background:#b9b9dc;"></div>
<div class="r" style="left:1676px;top:802px;width:1px;height:118px;background:#9a9aa8;"></div>
<div class="r" style="left:1677px;top:802px;width:2px;height:118px;background:#fbfbfb;"></div>
<div class="r" style="left:401px;top:824px;width:1272px;height:93px;background:#ffffff;border-top:1px solid #a0a0a0;border-left:1px solid #a0a0a0;box-sizing:border-box;"></div>
<div class="r" style="left:196px;top:929px;width:200px;height:1px;background:#ffffff;"></div>
<div class="r" style="left:394px;top:930px;width:3px;height:105px;background:#fafafa;"></div>
<svg class="r" style="left:207px;top:938px" width="14" height="9" viewBox="0 0 14 9"><path d="M1.2 0h11.6l1.2 3.9h-14z" fill="#e0e0e0"/><rect x="0" y="3.8" width="14" height="4.2" fill="#d0d0d0"/><rect x="1" y="3.9" width="12.2" height="3.1" fill="#8e8e8e"/></svg>
<div class="r" style="left:397px;top:930px;width:1px;height:105px;background:#a0a0a0;"></div>
<div class="r" style="left:398px;top:930px;width:1282px;height:1px;background:#ffffff;"></div>
<div class="r" style="left:196px;top:1035px;width:1505px;height:19px;background:#f0f0f0;"></div>
<div class="r" style="left:196px;top:1035px;width:1505px;height:1px;background:#ffffff;"></div>
<div class="r" style="left:1680px;top:393px;width:1px;height:642px;background:#ffffff;"></div>
<div class="r" style="left:1681px;top:393px;width:19px;height:642px;background:#f0f0f0;"></div>
<div class="r" style="left:1681px;top:414px;width:19px;height:429px;background:#cdcdcd;"></div>
<svg class="r" style="left:1685px;top:399px" width="11" height="8" viewBox="0 0 11 8"><path d="M1 6.5l4.5-4.5 4.5 4.5" stroke="#505050" stroke-width="1.8" fill="none"/></svg>
<svg class="r" style="left:1685px;top:1020px" width="11" height="8" viewBox="0 0 11 8"><path d="M1 1.5l4.5 4.5 4.5-4.5" stroke="#505050" stroke-width="1.8" fill="none"/></svg>
<div class="r" style="left:201px;top:1039px;width:11px;height:12px;background:#000;"></div>
<div class="r" style="left:305px;top:1039px;width:10px;height:12px;background:#000080;"></div>
<div class="r" style="left:196px;top:1054px;width:1505px;height:1px;background:#a8a8a8;"></div>
<div class="r" style="left:214px;top:1054px;width:87px;height:1px;background:#f0f0f0;"></div>
<div class="r" style="left:318px;top:1054px;width:98px;height:1px;background:#f0f0f0;"></div>
<div class="r" style="left:1700px;top:1036px;width:1px;height:19px;background:#a8a8a8;"></div>
<div class="r" style="left:1706px;top:94px;width:190px;height:1px;background:#a0a0a0;"></div>
<div class="r" style="left:1707px;top:95px;width:188px;height:1px;background:#696969;"></div>
<div class="r" style="left:1706px;top:94px;width:1px;height:962px;background:#a0a0a0;"></div>
<div class="r" style="left:1707px;top:95px;width:1px;height:960px;background:#696969;"></div>
<div class="r" style="left:1708px;top:96px;width:187px;height:959px;background:#ffffff;"></div>
<div class="r" style="left:1706px;top:1055px;width:190px;height:1px;background:#e8e8e8;"></div>
<div class="r" style="left:1894px;top:94px;width:1px;height:962px;background:#f4f4f4;"></div>
<div class="r" style="left:1895px;top:38px;width:1px;height:1048px;background:#8fbbe2;"></div>
<div class="r" style="left:1708px;top:97px;width:187px;height:25px;background:#f0f0f0;"></div>
<div class="r" style="left:1708px;top:122px;width:187px;height:1px;background:#a0a0a0;"></div>
<div class="r" style="left:1708px;top:124px;width:186px;height:31px;background:linear-gradient(#bcd3ee,#a9c3e3 55%,#9ab3d6);"></div>
<svg class="r" style="left:1872px;top:134px" width="14" height="8" viewBox="0 0 14 8"><path d="M1 7.2h12L7 1z" fill="#000"/></svg>
<svg class="r" style="left:1877px;top:162px" width="8" height="15" viewBox="0 0 8 15"><path d="M1 0.8v13.4l6.4-6.7z" fill="#000"/></svg>
<div class="r" style="left:1675px;top:1059px;width:1px;height:27px;background:#d2d2d2;"></div>
<div class="r" style="left:1808px;top:1059px;width:1px;height:27px;background:#d2d2d2;"></div>
<div class="r" style="left:1893px;top:1059px;width:1px;height:27px;background:#d2d2d2;"></div>
<span class="t" style="left:35px;top:10px;color:#fff;transform:scaleX(0.9870);">Správa počítače</span>
<span class="t" style="left:11px;top:42px;transform:scaleX(1.0023);"><u>S</u>oubor</span>
<span class="t" style="left:75px;top:42px;transform:scaleX(0.9593);"><u>A</u>kce</span>
<span class="t" style="left:123px;top:42px;transform:scaleX(1.0516);"><u>Z</u>obrazit</span>
<span class="t" style="left:195px;top:42px;transform:scaleX(1.0233);"><u>N</u>ápověda</span>
<span class="t" style="left:27px;top:98px;transform:scaleX(0.9761);">Správa počítače (místní)</span>
<span class="t" style="left:46px;top:120px;transform:scaleX(0.9679);">Systémové nástroje</span>
<span class="t" style="left:65px;top:142px;transform:scaleX(0.9763);">Plánovač úloh</span>
<span class="t" style="left:65px;top:164px;transform:scaleX(0.9813);">Prohlížeč událostí</span>
<span class="t" style="left:65px;top:186px;transform:scaleX(0.9667);">Sdílené složky</span>
<span class="t" style="left:65px;top:208px;transform:scaleX(0.9592);">Výkon</span>
<span class="t" style="left:65px;top:230px;transform:scaleX(0.9550);">Správce zařízení</span>
<span class="t" style="left:46px;top:252px;transform:scaleX(1.0026);">Úložiště</span>
<span class="t" style="left:65px;top:274px;transform:scaleX(0.9571);">Správa disků</span>
<span class="t" style="left:46px;top:296px;transform:scaleX(0.9766);">Služby a aplikace</span>
<span class="t" style="left:202px;top:99px;transform:scaleX(0.9349);">Svazek</span>
<span class="t" style="left:381px;top:99px;transform:scaleX(0.9551);">Rozvržení</span>
<span class="t" style="left:471px;top:99px;transform:scaleX(0.9922);">Typ</span>
<span class="t" style="left:540px;top:99px;transform:scaleX(0.9779);">Systém souborů</span>
<span class="t" style="left:657px;top:99px;transform:scaleX(0.9495);">Stav</span>
<span class="t" style="left:1180px;top:99px;transform:scaleX(0.9936);">Kapacita</span>
<span class="t" style="left:1266px;top:99px;transform:scaleX(1.0078);">Volné místo</span>
<span class="t" style="left:1357px;top:99px;transform:scaleX(0.9830);">% volného místa</span>
<span class="t" style="left:381px;top:121px;transform:scaleX(0.9641);">Jednoduchý</span>
<span class="t" style="left:471px;top:121px;transform:scaleX(0.9905);">Základní</span>
<span class="t" style="left:657px;top:121px;transform:scaleX(1.0089);">V pořádku (Oddíl pro obnovení)</span>
<span class="t" style="left:1180px;top:121px;transform:scaleX(0.9574);">450 MB</span>
<span class="t" style="left:1266px;top:121px;transform:scaleX(0.9574);">450 MB</span>
<span class="t" style="left:1357px;top:121px;transform:scaleX(0.9401);">100 %</span>
<span class="t" style="left:221px;top:142px;transform:scaleX(0.8600);">(C:)</span>
<span class="t" style="left:381px;top:142px;transform:scaleX(0.9641);">Jednoduchý</span>
<span class="t" style="left:471px;top:142px;transform:scaleX(0.9905);">Základní</span>
<span class="t" style="left:540px;top:142px;transform:scaleX(0.8680);">NTFS</span>
<span class="t" style="left:657px;top:142px;transform:scaleX(0.9775);">V pořádku (Spouštěcí oddíl, Stránkovací soubor, Stav systému, Primární oddíl)</span>
<span class="t" style="left:1180px;top:142px;transform:scaleX(0.9203);">232,35 GB</span>
<span class="t" style="left:1266px;top:142px;transform:scaleX(0.9203);">179,15 GB</span>
<span class="t" style="left:1357px;top:142px;transform:scaleX(0.9356);">77 %</span>
<span class="t" style="left:216px;top:163px;transform:scaleX(0.9161);">1TB_Seagate (E:)</span>
<span class="t" style="left:381px;top:163px;transform:scaleX(0.9641);">Jednoduchý</span>
<span class="t" style="left:471px;top:163px;transform:scaleX(0.9905);">Základní</span>
<span class="t" style="left:540px;top:163px;transform:scaleX(0.8680);">NTFS</span>
<span class="t" style="left:657px;top:163px;transform:scaleX(0.9945);">V pořádku (Aktivní, Primární oddíl)</span>
<span class="t" style="left:1180px;top:163px;transform:scaleX(0.9203);">931,51 GB</span>
<span class="t" style="left:1266px;top:163px;transform:scaleX(0.9203);">273,40 GB</span>
<span class="t" style="left:1357px;top:163px;transform:scaleX(0.9356);">29 %</span>
<span class="t" style="left:216px;top:184px;transform:scaleX(0.9316);">2TB_big (G:)</span>
<span class="t" style="left:381px;top:184px;transform:scaleX(0.9641);">Jednoduchý</span>
<span class="t" style="left:471px;top:184px;transform:scaleX(0.9905);">Základní</span>
<span class="t" style="left:540px;top:184px;transform:scaleX(0.8680);">NTFS</span>
<span class="t" style="left:657px;top:184px;transform:scaleX(1.0005);">V pořádku (Primární oddíl)</span>
<span class="t" style="left:1180px;top:184px;transform:scaleX(0.9243);">1716,53 GB</span>
<span class="t" style="left:1266px;top:184px;transform:scaleX(0.9071);">93,66 GB</span>
<span class="t" style="left:1357px;top:184px;transform:scaleX(0.9281);">5 %</span>
<span class="t" style="left:216px;top:205px;transform:scaleX(0.9507);">2TB_big_zbytek (D:)</span>
<span class="t" style="left:381px;top:205px;transform:scaleX(0.9641);">Jednoduchý</span>
<span class="t" style="left:471px;top:205px;transform:scaleX(0.9905);">Základní</span>
<span class="t" style="left:540px;top:205px;transform:scaleX(0.8680);">NTFS</span>
<span class="t" style="left:657px;top:205px;transform:scaleX(0.9945);">V pořádku (Aktivní, Primární oddíl)</span>
<span class="t" style="left:1180px;top:205px;transform:scaleX(0.9203);">146,48 GB</span>
<span class="t" style="left:1266px;top:205px;transform:scaleX(0.9203);">146,36 GB</span>
<span class="t" style="left:1357px;top:205px;transform:scaleX(0.9401);">100 %</span>
<span class="t" style="left:216px;top:226px;transform:scaleX(0.9084);">BIG DADDY_2TB (F:)</span>
<span class="t" style="left:381px;top:226px;transform:scaleX(0.9641);">Jednoduchý</span>
<span class="t" style="left:471px;top:226px;transform:scaleX(0.9905);">Základní</span>
<span class="t" style="left:540px;top:226px;transform:scaleX(0.8680);">NTFS</span>
<span class="t" style="left:657px;top:226px;transform:scaleX(1.0005);">V pořádku (Primární oddíl)</span>
<span class="t" style="left:1180px;top:226px;transform:scaleX(0.9243);">1863,01 GB</span>
<span class="t" style="left:1266px;top:226px;transform:scaleX(0.9071);">97,56 GB</span>
<span class="t" style="left:1357px;top:226px;transform:scaleX(0.9281);">5 %</span>
<span class="t" style="left:216px;top:247px;transform:scaleX(0.9602);">Rezervováno systémem</span>
<span class="t" style="left:381px;top:247px;transform:scaleX(0.9641);">Jednoduchý</span>
<span class="t" style="left:471px;top:247px;transform:scaleX(0.9905);">Základní</span>
<span class="t" style="left:540px;top:247px;transform:scaleX(0.8680);">NTFS</span>
<span class="t" style="left:657px;top:247px;transform:scaleX(0.9833);">V pořádku (Systém, Aktivní, Primární oddíl)</span>
<span class="t" style="left:1180px;top:247px;transform:scaleX(0.9574);">100 MB</span>
<span class="t" style="left:1266px;top:247px;transform:scaleX(0.9571);">69 MB</span>
<span class="t" style="left:1357px;top:247px;transform:scaleX(0.9356);">69 %</span>
<span class="t b" style="left:225px;top:410px;transform:scaleX(0.9841);">Disk 0</span>
<span class="t" style="left:205px;top:430px;transform:scaleX(0.9905);">Základní</span>
<span class="t" style="left:205px;top:450px;transform:scaleX(0.9305);">1863,02 GB</span>
<span class="t" style="left:205px;top:470px;transform:scaleX(1.0032);">Online</span>
<span class="t b" style="left:405px;top:432px;transform:scaleX(0.9639);">2TB_big_zbytek  (D:)</span>
<span class="t" style="left:405px;top:452px;transform:scaleX(0.8995);">146,48 GB NTFS</span>
<span class="t" style="left:405px;top:472px;transform:scaleX(0.9945);">V pořádku (Aktivní, Primární oddíl)</span>
<span class="t b" style="left:985px;top:432px;transform:scaleX(0.9610);">2TB_big  (G:)</span>
<span class="t" style="left:985px;top:452px;transform:scaleX(0.9076);">1716,53 GB NTFS</span>
<span class="t" style="left:985px;top:472px;transform:scaleX(1.0005);">V pořádku (Primární oddíl)</span>
<span class="t b" style="left:225px;top:542px;transform:scaleX(0.9841);">Disk 1</span>
<span class="t" style="left:205px;top:562px;transform:scaleX(0.9905);">Základní</span>
<span class="t" style="left:205px;top:582px;transform:scaleX(0.9203);">232,88 GB</span>
<span class="t" style="left:205px;top:602px;transform:scaleX(1.0032);">Online</span>
<span class="t b" style="left:405px;top:564px;transform:scaleX(0.9712);">Rezervováno systémem</span>
<span class="t" style="left:405px;top:584px;transform:scaleX(0.9207);">100 MB NTFS</span>
<span class="t" style="left:405px;top:604px;transform:scaleX(0.9833);max-width:205.4px;overflow:hidden;">V pořádku (Systém, Aktivní, Primární oddíl)</span>
<span class="t b" style="left:623px;top:564px;transform:scaleX(0.9369);">  (C:)</span>
<span class="t" style="left:623px;top:584px;transform:scaleX(0.8995);">232,35 GB NTFS</span>
<span class="t" style="left:623px;top:604px;transform:scaleX(0.9775);">V pořádku (Spouštěcí oddíl, Stránkovací soubor, Stav systému, Primární oddíl)</span>
<span class="t" style="left:1210px;top:584px;background:#ffffff;padding-right:7px;transform:scaleX(0.9574);">450 MB</span>
<span class="t" style="left:1210px;top:604px;background:#ffffff;padding-right:7px;transform:scaleX(1.0089);">V pořádku (Oddíl pro obnovení)</span>
<span class="t b" style="left:225px;top:674px;transform:scaleX(0.9841);">Disk 2</span>
<span class="t" style="left:205px;top:694px;transform:scaleX(0.9905);">Základní</span>
<span class="t" style="left:205px;top:714px;transform:scaleX(0.9203);">931,51 GB</span>
<span class="t" style="left:205px;top:734px;transform:scaleX(1.0032);">Online</span>
<span class="t b" style="left:405px;top:696px;transform:scaleX(0.9408);">1TB_Seagate  (E:)</span>
<span class="t" style="left:405px;top:716px;transform:scaleX(0.8995);">931,51 GB NTFS</span>
<span class="t" style="left:405px;top:736px;transform:scaleX(0.9945);">V pořádku (Aktivní, Primární oddíl)</span>
<span class="t b" style="left:225px;top:806px;transform:scaleX(0.9841);">Disk 3</span>
<span class="t" style="left:205px;top:826px;transform:scaleX(0.9905);">Základní</span>
<span class="t" style="left:205px;top:846px;transform:scaleX(0.9305);">1863,02 GB</span>
<span class="t" style="left:205px;top:866px;transform:scaleX(1.0032);">Online</span>
<span class="t b" style="left:405px;top:828px;transform:scaleX(0.9652);">BIG DADDY_2TB  (F:)</span>
<span class="t" style="left:405px;top:848px;transform:scaleX(0.9076);">1863,01 GB NTFS</span>
<span class="t" style="left:405px;top:868px;transform:scaleX(1.0005);">V pořádku (Primární oddíl)</span>
<span class="t b" style="left:225px;top:938px;transform:scaleX(0.9841);">Disk 4</span>
<span class="t" style="left:205px;top:958px;transform:scaleX(1.0019);">Vyměnitelné médium (H:)</span>
<span class="t" style="left:205px;top:998px;transform:scaleX(1.0094);">Žádné médium</span>
<span class="t" style="left:217px;top:1038px;transform:scaleX(1.0034);">Nepřiřazeno</span>
<span class="t" style="left:320px;top:1038px;transform:scaleX(1.0013);">Primární oddíl</span>
<span class="t b" style="left:1713px;top:101px;transform:scaleX(0.9760);">Akce</span>
<span class="t" style="left:1716px;top:131px;transform:scaleX(0.9571);">Správa disků</span>
<span class="t" style="left:1746px;top:161px;transform:scaleX(0.9639);">Další akce</span>
</body></html>
